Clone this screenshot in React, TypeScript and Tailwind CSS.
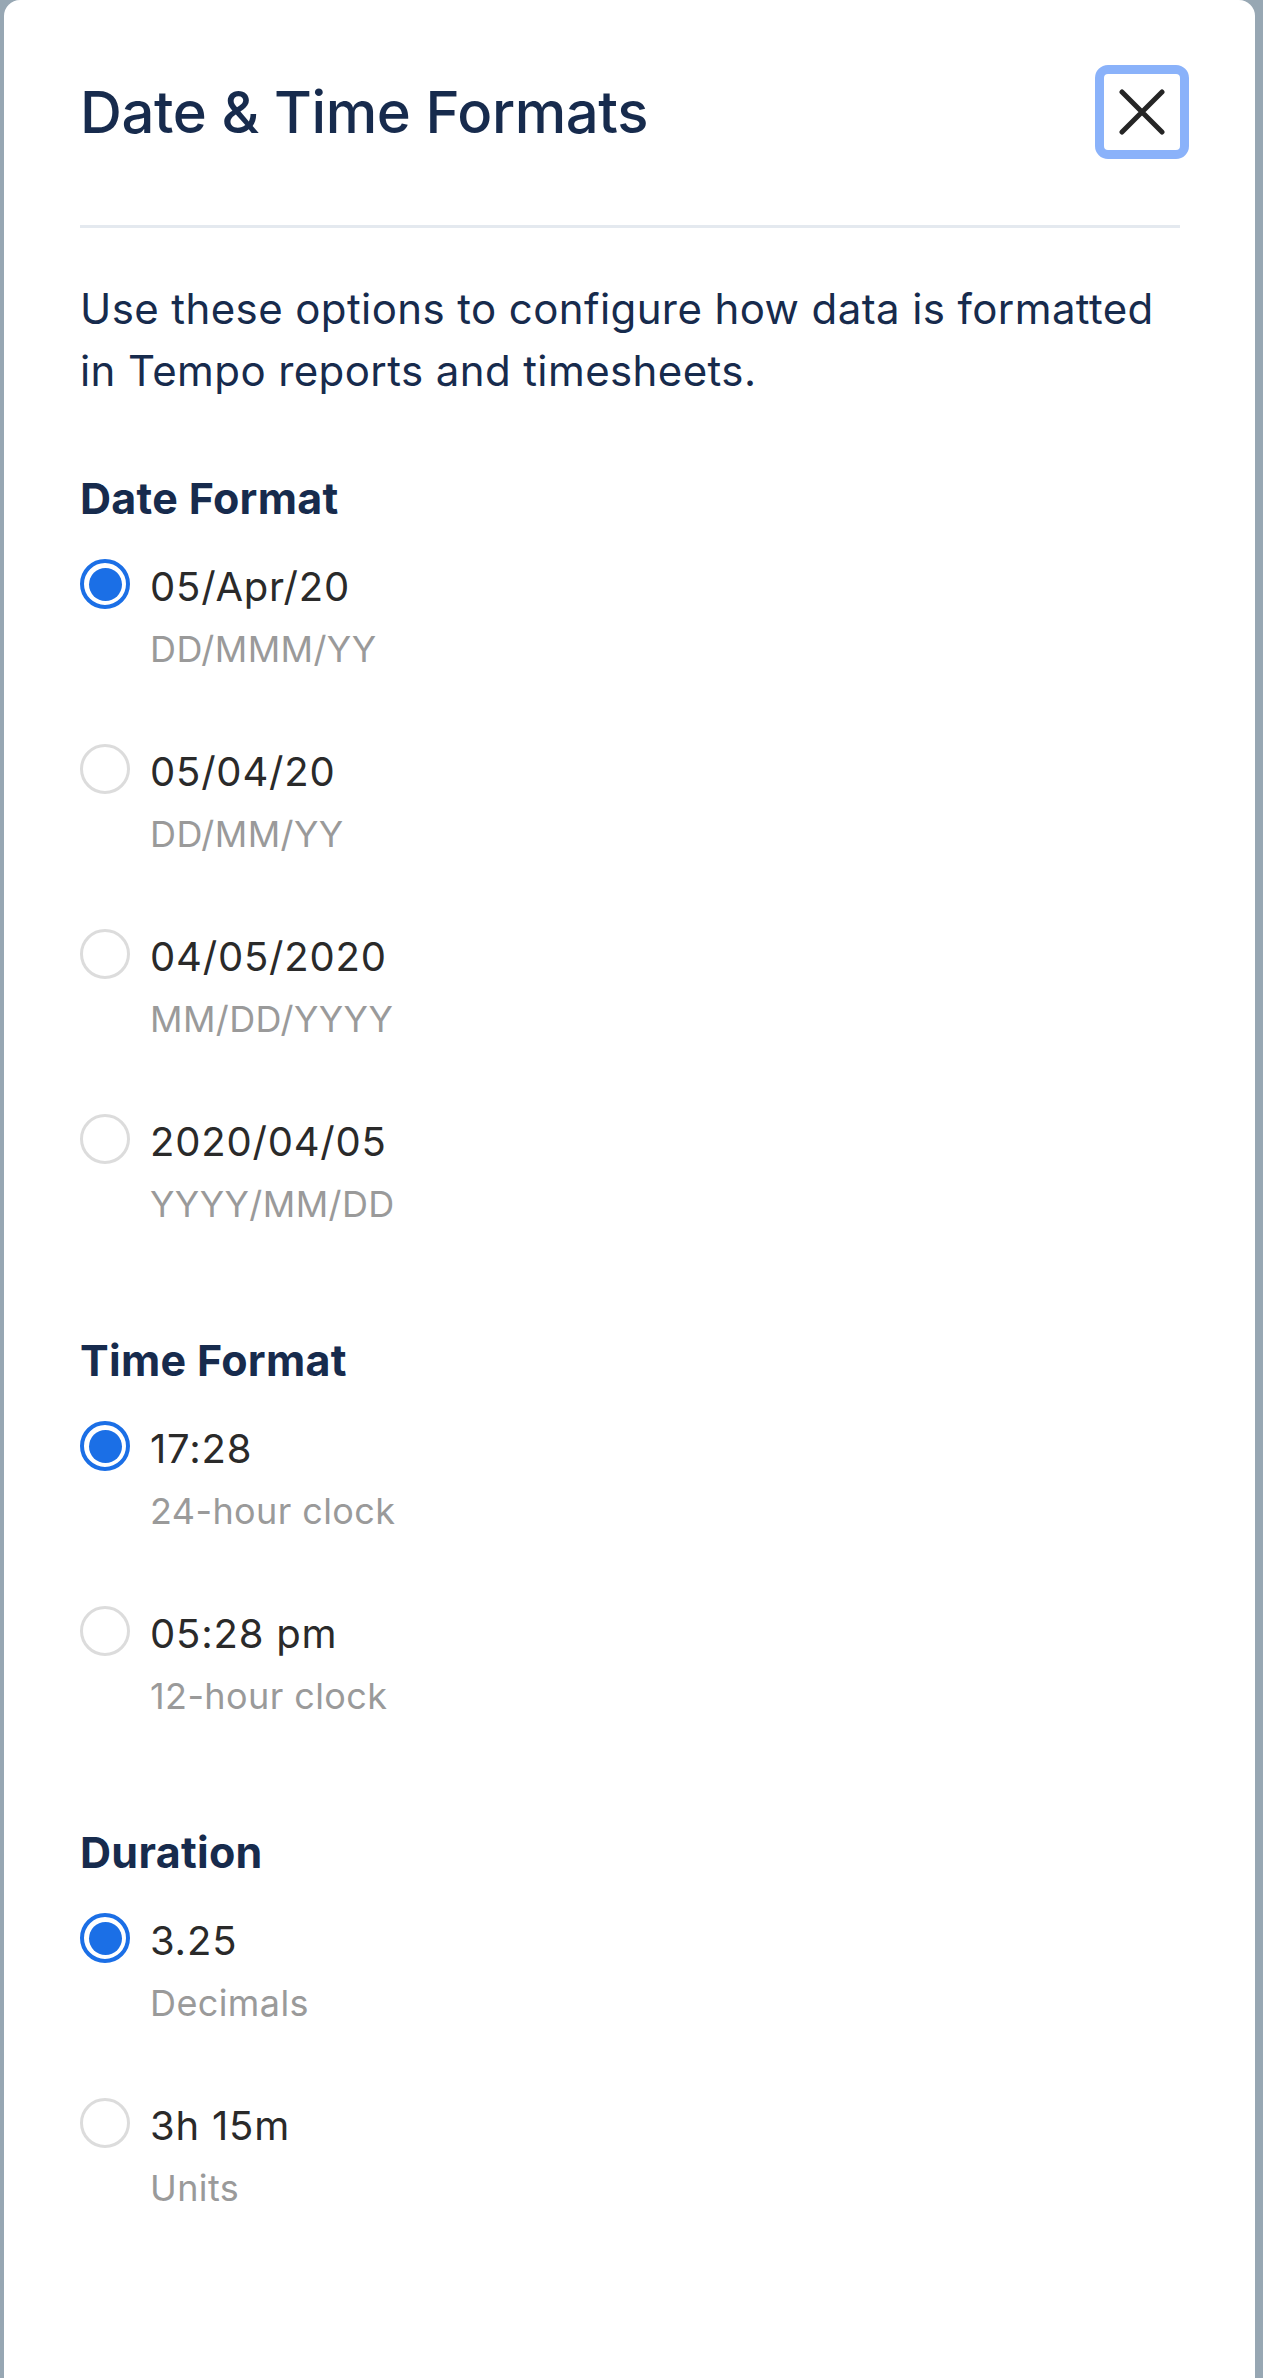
import { useState } from "react";

type Option = { value: string; label: string; hint: string };

const sections: { title: string; options: Option[] }[] = [
  {
    title: "Date Format",
    options: [
      { value: "dmmy", label: "05/Apr/20", hint: "DD/MMM/YY" },
      { value: "dmy", label: "05/04/20", hint: "DD/MM/YY" },
      { value: "mdy", label: "04/05/2020", hint: "MM/DD/YYYY" },
      { value: "ymd", label: "2020/04/05", hint: "YYYY/MM/DD" },
    ],
  },
  {
    title: "Time Format",
    options: [
      { value: "24", label: "17:28", hint: "24-hour clock" },
      { value: "12", label: "05:28 pm", hint: "12-hour clock" },
    ],
  },
  {
    title: "Duration",
    options: [
      { value: "dec", label: "3.25", hint: "Decimals" },
      { value: "units", label: "3h 15m", hint: "Units" },
    ],
  },
];

function Radio({ checked }: { checked: boolean }) {
  return checked ? (
    <span className="flex h-[50px] w-[50px] shrink-0 items-center justify-center rounded-full border-[4px] border-[#1b6fe6] bg-white">
      <span className="h-[33px] w-[33px] rounded-full bg-[#1b6fe6]" />
    </span>
  ) : (
    <span className="h-[50px] w-[50px] shrink-0 rounded-full border-[3px] border-[#dcdcdc] bg-white" />
  );
}

export default function App() {
  const [picked, setPicked] = useState<string[]>(["dmmy", "24", "dec"]);

  return (
    <div
      className="min-h-[2378px] bg-[#97a7b3] pl-[4px] pr-[8px]"
      style={{ fontFamily: "Inter, 'Liberation Sans', sans-serif" }}
    >
      <div className="min-h-[2378px] rounded-t-[16px] bg-white pl-[76px] pr-[75px] pt-[74px]">
        <div className="flex items-center justify-between">
          <h1 className="text-[58px] font-medium leading-[76px] tracking-[-0.4px] text-[#172b4d]">
            Date &amp; Time Formats
          </h1>
          <button
            type="button"
            className="flex h-[76px] w-[76px] items-center justify-center rounded-[4px] bg-white outline outline-[9px] outline-[#8ab2fa]"
          >
            <svg width="46" height="46" viewBox="0 0 46 46" fill="none">
              <path d="M3 3L43 43M43 3L3 43" stroke="#252525" strokeWidth="5" strokeLinecap="round" />
            </svg>
          </button>
        </div>

        <div className="mt-[75px] h-[3px] bg-[#e4e9ef]" />

        <p className="mt-[50px] text-[42px] leading-[62px] tracking-[0.4px] text-[#172b4d]">
          Use these options to configure how data is formatted in Tempo reports and timesheets.
        </p>

        {sections.map((section, si) => (
          <section key={section.title} className={si === 0 ? "mt-[72px]" : "mt-[110px]"}>
            <h2 className="text-[43px] font-bold leading-[48px] tracking-[0.3px] text-[#172b4d]">
              {section.title}
            </h2>
            <div className="mt-[37px] flex flex-col gap-[73px]">
              {section.options.map((opt) => {
                const checked = picked[si] === opt.value;
                return (
                  <label
                    key={opt.value}
                    className="flex cursor-pointer items-start gap-[20px]"
                    onClick={() =>
                      setPicked((p) => p.map((v, i) => (i === si ? opt.value : v)))
                    }
                  >
                    <Radio checked={checked} />
                    <div className="flex flex-col">
                      <span className="mt-[3px] text-[40px] leading-[50px] tracking-[0.8px] text-[#2a2a2a]">
                        {opt.label}
                      </span>
                      <span className="mt-[15px] text-[36px] leading-[44px] tracking-[0.4px] text-[#9a9a9a]">
                        {opt.hint}
                      </span>
                    </div>
                  </label>
                );
              })}
            </div>
          </section>
        ))}
      </div>
    </div>
  );
}
